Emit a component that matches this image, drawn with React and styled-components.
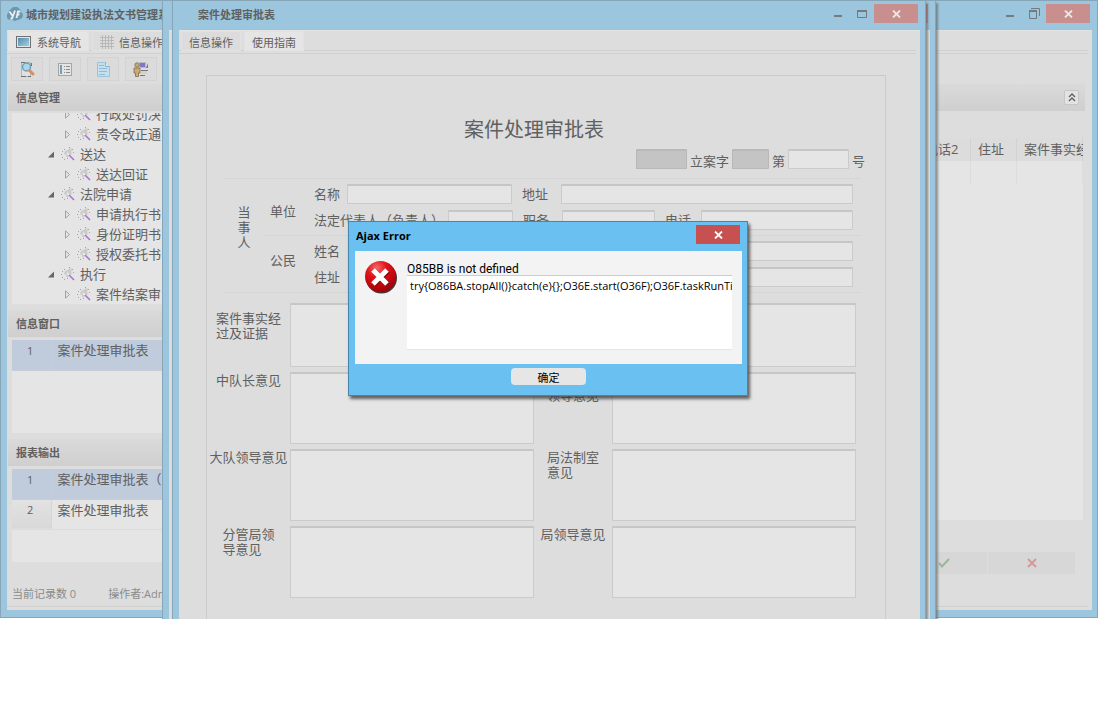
import React from 'react';
import styled, { createGlobalStyle } from 'styled-components';

const GlobalStyle = createGlobalStyle`
  * {
    box-sizing: border-box;
  }

  body {
    margin: 0;
    background: #fff;
    color: #606060;
    font-family: 'Open Sans', 'Noto Sans CJK SC', sans-serif;
    font-size: 13px;
    line-height: 15px;
  }

  button,
  input,
  textarea {
    margin: 0;
    font: inherit;
    color: inherit;
  }

  svg {
    display: block;
    flex: none;
  }
`;

/* ---------- windows ---------- */

const Desktop = styled.div`
  position: relative;
  overflow: hidden;
  padding-bottom: 1px;
`;

const Window = styled.section`
  display: flex;
  flex-direction: column;
  padding: 0 ${p => (p.$slim ? 5 : 6)}px 0 6px;
  background: #9bc6de;
  border: 1px solid #86a6b7;
`;

const MainWindow = styled(Window)`
  padding: 0 5px 7px 6px;
`;

const LayeredWindow = styled(Window)`
  position: absolute;
  top: 0;
  bottom: 0;
  left: ${p => p.$left}px;
  right: ${p => p.$right}px;
  border-bottom: 0;
  box-shadow: 2px 3px 2px rgba(90, 90, 90, 0.6);
`;

const TitleBar = styled.header`
  flex: none;
  display: flex;
  align-items: flex-start;
  height: 29px;
  padding-left: ${p => p.$indent || 0}px;
  padding-right: 2px;
`;

const WindowTitle = styled.h1`
  flex: 1;
  display: flex;
  align-items: center;
  gap: 3px;
  margin: 0;
  height: 26px;
  overflow: hidden;
  white-space: nowrap;
  font-size: 11px;
  font-weight: 700;
  color: ${p => (p.$active ? '#000' : '#606060')};
`;

const WindowButton = styled.button`
  display: flex;
  align-items: center;
  justify-content: center;
  width: 24px;
  height: 24px;
  padding: 0;
  border: 0;
  background: none;
  color: #72808a;
`;

const CloseButton = styled(WindowButton)`
  width: 44px;
  height: 19px;
  margin-top: 3px;
  background: ${p => (p.$active ? '#c75050' : '#c98f8e')};
  color: ${p => (p.$active ? '#fff' : '#e8e8e8')};
`;

const WindowBody = styled.div`
  flex: 1;
  display: flex;
  flex-direction: column;
  min-height: 0;
  background: #ddd;
  box-shadow: inset 0 1px 0 #e2e2e2;
`;

/* ---------- tabs ---------- */

const TabStrip = styled.nav`
  flex: none;
  display: flex;
  gap: 3px;
  height: 24px;
  margin-right: 4px;
  padding: 1px 0 0 ${p => p.$indent}px;
  border-bottom: 1px solid #d0d0d0;
  box-shadow: inset 0 -2px 0 #dedede, inset 0 -3px 0 #d0d0d0;
`;

const Tab = styled.button`
  display: flex;
  align-items: center;
  gap: 5px;
  height: 20px;
  padding: 2px 7px 0;
  white-space: nowrap;
  font-size: 11px;
  border: 1px solid #e2e2e2;
  background: ${p => (p.$light ? '#e5e5e5' : '#dcdcdc')};
`;

/* ---------- main window ---------- */

const Split = styled.div`
  display: flex;
`;

const Sidebar = styled.aside`
  flex: none;
  width: 200px;
`;

const Toolbar = styled.div`
  display: flex;
  gap: 6px;
  padding: 3px 4px;
`;

const ToolButton = styled.button`
  display: flex;
  align-items: center;
  justify-content: center;
  width: 32px;
  height: 24px;
  padding: 0;
  background: #dbdbdb;
  border: 1px solid #d3d3d3;
`;

const PanelHeader = styled.h2`
  display: flex;
  align-items: center;
  justify-content: space-between;
  height: 27px;
  margin: 0 0 0 1px;
  padding: 0 6px 0 8px;
  font-size: 11px;
  font-weight: 700;
  background: linear-gradient(#dadada, #cfcfcf);
`;

const CollapseButton = styled.button`
  display: flex;
  align-items: center;
  justify-content: center;
  width: 15px;
  height: 15px;
  padding: 0;
  background: #e3e3e3;
  border: 1px solid #c6c6c6;
  border-radius: 2px;
`;

const TreeBox = styled.div`
  display: flex;
  flex-direction: column;
  justify-content: flex-end;
  height: 191px;
  margin: 2px 0 6px 5px;
  overflow: hidden;
  background: #e5e5e5;
`;

const Tree = styled.ul`
  margin: 0;
  padding: 0;
  list-style: none;
`;

const TreeItem = styled.li`
  display: flex;
  align-items: center;
  gap: 5px;
  height: 20px;
  padding-left: ${p => (p.$branch ? 36 : 52)}px;
  white-space: nowrap;
`;

const ListBox = styled.div`
  height: 93px;
  margin: 3px 0 6px 5px;
  overflow: hidden;
  background: #e5e5e5;
`;

const ListTable = styled.table`
  width: 100%;
  border-collapse: collapse;

  th,
  td {
    height: 30px;
    padding: 0 6px 8px;
    white-space: nowrap;
    text-align: left;
    font-weight: 400;
    border-bottom: 1px solid #dcdcdc;
  }

  th {
    width: 39px;
    padding-right: 8px;
    padding-bottom: 9px;
    text-align: center;
    font-size: 11px;
    border-right: 1px solid #d6d6d6;
    background: linear-gradient(#e2e2e2, #d8d8d8);
  }
`;

const ListRow = styled.tr`
  && th,
  && td {
    ${p => p.$selected && 'background: #c0cbdc; border-color: #c6ced9;'}
  }
`;

const DataPanel = styled.main`
  flex: 1;
  min-width: 0;
  padding: 30px 7px 0 0;
`;

const DataTableBox = styled.div`
  height: 382px;
  margin: 27px 2px 32px 0;
  overflow: hidden;
  background: #e5e5e5;
`;

const DataTable = styled.table`
  width: 100%;
  table-layout: fixed;
  border-collapse: collapse;

  th,
  td {
    height: 23px;
    padding: 0 0 0 7px;
    white-space: nowrap;
    text-align: left;
    font-weight: 400;
    border-right: 1px solid #d2d2d2;
  }

  th {
    background: #dcdcdc;
  }

  td {
    border-color: #dcdcdc;
  }
`;

const Column = styled.col`
  width: ${p => (p.$width ? `${p.$width}px` : 'auto')};
`;

const PanelActions = styled.div`
  display: flex;
  justify-content: flex-end;
  gap: 1px;
  padding-right: 10px;
`;

const ActionButton = styled.button`
  display: flex;
  align-items: center;
  justify-content: center;
  width: 87px;
  height: 22px;
  padding: 0;
  border: 0;
  background: #d7d7d7;
`;

const StatusBar = styled.footer`
  display: flex;
  gap: 32px;
  height: 33px;
  margin: 0 4px 3px 0;
  padding: 12px 5px 0;
  font-size: 11px;
  color: #8b8b8b;
  border-bottom: 1px solid #d0d0d0;
`;

/* ---------- approval form ---------- */

const Paper = styled.form`
  flex: 1;
  margin: 21px 34px 0 27px;
  border: 1px solid #cbcbcb;
  border-bottom: 0;
`;

const FormTitle = styled.h2`
  margin: 42px 24px 7px 0;
  font-size: 20px;
  font-weight: 400;
  line-height: 24px;
  text-align: center;
`;

const NumberRow = styled.div`
  display: flex;
  align-items: flex-end;
  justify-content: flex-end;
  gap: 3px;
  margin: 0 20px 9px;
`;

const Input = styled.input`
  flex: ${p => p.$grow || 1} 1 0;
  min-width: 0;
  width: 100%;
  height: 20px;
  padding: 0 4px;
  border: 1px solid #cbcbcb;
  border-top: 2px solid #c6c6c6;
  border-radius: 1px;
  background: #e5e5e5;
  outline: 0;
`;

const NumberInput = styled(Input)`
  flex: none;
  width: ${p => p.$width}px;

  &:read-only {
    background: #c4c4c4;
    border-color: #b8b8b8;
  }
`;

const PartySection = styled.fieldset`
  display: grid;
  grid-template-columns: 40px 1fr;
  align-items: center;
  margin: 0 24px 10px 17px;
  padding: 0;
  border: 1px solid #d5d5d5;
  border-width: 1px 0;
`;

const PartyName = styled.div`
  width: 13px;
  margin: 0 auto;
  padding-bottom: 17px;
`;

const PartyGroup = styled.div`
  display: grid;
  grid-template-columns: 50px 1fr;
  align-items: center;
  padding: 5px 8px 5px 0;

  & + & {
    border-top: 1px solid #d5d5d5;
  }
`;

const PartyGroups = styled.div``;

const GroupName = styled.div`
  padding: ${p => (p.$low ? '8px 0 0' : '0 0 8px')} 6px;
`;

const GroupRows = styled.div`
  display: flex;
  flex-direction: column;
  gap: 6px;
`;

const FieldRow = styled.div`
  display: flex;
  gap: 10px;
`;

const FieldBox = styled.div`
  flex: ${p => p.$grow || 1} 1 0;
  display: flex;
  align-items: center;
  gap: 4px;
  min-width: 0;
`;

const FieldLabel = styled.label`
  flex: none;
  min-width: ${p => p.$width || 0}px;
  white-space: nowrap;
`;

const Opinions = styled.div`
  display: grid;
  grid-template-columns: 83px 1fr 78px 1fr;
  row-gap: 5px;
  margin-right: 29px;
`;

const OpinionLabel = styled.label`
  display: flex;
  justify-content: center;
  padding-top: ${p => (p.$wide ? 8 : 1)}px;
  white-space: pre;
`;

const TextBox = styled.textarea`
  display: block;
  width: 100%;
  height: ${p => (p.$wide ? 64 : 72)}px;
  padding: 4px;
  grid-column: ${p => (p.$wide ? 'span 3' : 'auto')};
  border: 1px solid #cbcbcb;
  border-top: 2px solid #c6c6c6;
  border-radius: 1px;
  background: #e5e5e5;
  resize: none;
  outline: 0;
`;

/* ---------- error dialog ---------- */

const Overlay = styled.div`
  position: absolute;
  inset: 0 2px 2px 0;
  display: flex;
  align-items: center;
  justify-content: center;
`;

const Dialog = styled.div`
  width: 400px;
  padding: 0 5px 0 6px;
  color: #000;
  background: #6ac1f1;
  border: 1px solid #4686aa;
  box-shadow: 2px 3px 3px rgba(50, 50, 50, 0.75);
`;

const DialogBody = styled.div`
  display: flex;
  gap: 10px;
  height: 113px;
  padding: 10px 10px 0 10px;
  background: #f3f3f3;
`;

const DialogContent = styled.div`
  flex: 1;
  min-width: 0;
`;

const DialogMessage = styled.label`
  display: block;
  height: 14px;
  padding-top: 1px;
  font-family: Roboto, sans-serif;
  font-size: 12px;
`;

const DialogDetail = styled.textarea`
  display: block;
  width: 100%;
  height: 75px;
  padding: 2px 0 0 3px;
  overflow: hidden;
  white-space: pre;
  font-size: 11px;
  line-height: 15px;
  border: 0;
  border-top: 1px solid #ccc;
  border-bottom: 1px solid #e6e6e6;
  background: #fff;
  resize: none;
  outline: 0;
`;

const DialogFooter = styled.div`
  display: flex;
  justify-content: center;
  padding: 4px 0 10px;
`;

const OkButton = styled.button`
  width: 75px;
  height: 17px;
  padding: 3px 0 0;
  font-size: 11px;
  line-height: 14px;
  border: 0;
  border-radius: 4px;
  background: #e6e6e6;
`;

/* ---------- icons ---------- */

const CloseIcon = () => (
  <svg width='9' height='8' viewBox='0 0 9 8'>
    <path d='M1 .5 8 7.5M8 .5 1 7.5' stroke='currentColor' strokeWidth='1.8' />
  </svg>
);

const MinimizeIcon = () => (
  <svg width='10' height='14' viewBox='0 0 10 14'>
    <rect x='1' y='9' width='8' height='2' fill='#737b80' />
  </svg>
);

const MaximizeIcon = () => (
  <svg width='11' height='12' viewBox='0 0 11 12'>
    <path d='M.5 3v7.500h9V3' fill='none' stroke='#737b80' />
    <rect width='10' height='2' y='3' fill='#737b80' />
  </svg>
);

const RestoreIcon = () => (
  <svg width='11' height='11' viewBox='0 0 11 11'>
    <path d='M2 .5h8.500V8M.5 3v7.500h7V3' fill='none' stroke='#737b80' />
    <rect y='2' width='8' height='2' fill='#737b80' />
  </svg>
);

const LogoIcon = () => (
  <svg width='16' height='14' viewBox='0 0 16 14'>
    <path
      d='M4 12.500a3.500 3.500 0 0 1-2.500-6.500A4 4 0 0 1 4 2a5 5 0 0 1 8-.500 5 5 0 0 1 2.500 4A4 4 0 0 1 12 12.500L8 14z'
      fill='#6b97b0'
    />
    <path
      d='M2.500 4.500 5.500 9M8 3.500 5 11.500H3.500M13.500 4.500H11L9.500 11M9.500 7.500h3'
      fill='none'
      stroke='#e8eef1'
      strokeWidth='1.8'
    />
  </svg>
);

const ScreenIcon = () => (
  <svg width='16' height='13' viewBox='0 0 16 13'>
    <defs>
      <linearGradient id='screen' x2='1' y2='1'>
        <stop offset='0' stopColor='#4f8eb3' />
        <stop offset='1' stopColor='#a9cbdc' />
      </linearGradient>
    </defs>
    <rect x='.5' y='.5' width='14' height='11' fill='#dfe5e8' stroke='#717171' />
    <rect x='2' y='2' width='11' height='8' fill='url(#screen)' />
  </svg>
);

const GridIcon = () => (
  <svg width='14' height='14' viewBox='0 0 14 14'>
    <path
      d='M2.500 0v14M5.500 0v14M8.500 0v14M11.500 0v14M0 2.500h14M0 5.500h14M0 8.500h14M0 11.500h14'
      stroke='#b8b8b8'
    />
  </svg>
);

const SearchPageIcon = () => (
  <svg width='16' height='17' viewBox='0 0 16 17'>
    <path d='M2.500 1.500h9v14h-9z' fill='#e0e0e0' stroke='#b5b5b5' />
    <path d='M2 1.500h4M9 15.500h3M2 15.500h5M12.500 2v3' stroke='#6f6f6f' />
    <circle cx='7.500' cy='6' r='4' fill='#a8d6ea' stroke='#6ea1b8' strokeWidth='1.500' />
    <path d='m10.500 9.500 3.500 3.500' stroke='#d1906a' strokeWidth='3' strokeLinecap='round' />
  </svg>
);

const FormIcon = () => (
  <svg width='14' height='13' viewBox='0 0 14 13'>
    <rect x='.5' y='.5' width='13' height='12' fill='#e4e4e4' stroke='#a6a6a6' />
    <path d='M3 2v9' stroke='#78a0b5' strokeWidth='2' />
    <path d='M6 3.500h1M6 6.500h1M6 9.500h1M8 3.500h4M8 6.500h4M8 9.500h4' stroke='#8b8b8b' />
  </svg>
);

const DocumentIcon = () => (
  <svg width='13' height='15' viewBox='0 0 13 15'>
    <path d='M.5 .5h8l4 4v10h-12z' fill='#c3e0ee' stroke='#9cc3d8' />
    <path d='M8.500 .5v4h4' fill='#e1edf3' stroke='#8cb0c4' />
    <path d='M2 3.500h5M2 6.500h8M2 9.500h8M2 12.500h6' stroke='#92bbd1' />
  </svg>
);

const PersonIcon = () => (
  <svg width='16' height='16' viewBox='0 0 16 16'>
    <rect x='6.500' y='1.500' width='6' height='5' fill='#7d78c8' stroke='#b9b8cf' />
    <path d='m13 7 2-5v5z' fill='#777' />
    <path d='M8 9.500h7M7 14.500h5' stroke='#777' />
    <rect x='8' y='10' width='6' height='3' fill='#d2d2d2' />
    <circle cx='4' cy='4' r='2.200' fill='#c9ab74' stroke='#7c6c4c' strokeWidth='.8' />
    <path
      d='M1 7h6v5H5.500v3.500h-3V12H1z'
      fill='#c9ab74'
      stroke='#7c6c4c'
      strokeWidth='.8'
    />
  </svg>
);

const WandIcon = () => (
  <svg width='14' height='14' viewBox='0 0 14 14'>
    <path d='m4 4 3-1 2-2 2 1-1 3 1 2-3 2-2 2-1-3-2-1z' fill='#cbcbcb' />
    <path
      d='M1 4.500h1M0 7.500h1M1 10.500h1M3 12.500h1M3 2.500h1M8 .5h1M11 2.500h1M12 5.500h1M6 11.500h1'
      stroke='#a5a5a5'
    />
    <path d='m6 6 2 2' stroke='#f0f0f0' strokeWidth='1.600' />
    <path d='m8 8 5 5' stroke='#ab73cf' strokeWidth='1.600' />
  </svg>
);

const ArrowIcon = ({ open }) => (
  <svg width='8' height='9' viewBox='0 0 8 9'>
    {open ? (
      <path d='M6 1.500v6H0z' fill='#666' />
    ) : (
      <path d='M1.500 .8 5.500 4.500l-4 3.700z' fill='none' stroke='#a2a2a2' />
    )}
  </svg>
);

const CollapseIcon = () => (
  <svg width='8' height='9' viewBox='0 0 8 9'>
    <path d='m1 4 3-3 3 3M1 8l3-3 3 3' fill='none' stroke='#606060' strokeWidth='1.400' />
  </svg>
);

const CheckIcon = () => (
  <svg width='12' height='10' viewBox='0 0 12 10'>
    <path d='m1 5 3 3.500L11 1' fill='none' stroke='#96b89d' strokeWidth='2' />
  </svg>
);

const CrossIcon = () => (
  <svg width='10' height='10' viewBox='0 0 10 10'>
    <path d='m1 1 8 8M9 1 1 9' stroke='#d29a96' strokeWidth='2' />
  </svg>
);

const ErrorIcon = () => (
  <svg width='32' height='33' viewBox='0 0 32 33'>
    <defs>
      <radialGradient id='ball' cx='.38' cy='.22' r='.8'>
        <stop offset='0' stopColor='#f46a66' />
        <stop offset='.4' stopColor='#e01219' />
        <stop offset='1' stopColor='#a30007' />
      </radialGradient>
    </defs>
    <circle cx='16.500' cy='17' r='15.500' fill='#4c3434' />
    <circle cx='15.500' cy='15.500' r='15.500' fill='url(#ball)' />
    <path d='m9 10 14 14M23 10 9 24' stroke='#7e0a0c' strokeWidth='5' />
    <path d='m8 9 14 14M22 9 8 23' stroke='#fff' strokeWidth='5' />
  </svg>
);

/* ---------- data ---------- */

const treeItems = [
  { text: '行政处罚决' },
  { text: '责令改正通' },
  { text: '送达', branch: true },
  { text: '送达回证' },
  { text: '法院申请', branch: true },
  { text: '申请执行书' },
  { text: '身份证明书' },
  { text: '授权委托书' },
  { text: '执行', branch: true },
  { text: '案件结案审' }
];

const opinions = [
  { id: 'squadron', text: '中队长意见' },
  { id: 'branch', text: '分管\n领导意见' },
  { id: 'brigade', text: '大队领导意见' },
  { id: 'legal', text: '局法制室\n意见' },
  { id: 'deputy', text: '分管局领\n导意见' },
  { id: 'bureau', text: '局领导意见' }
];

/* ---------- parts ---------- */

const Controls = ({ restore }) => (
  <>
    <WindowButton aria-label='最小化'>
      <MinimizeIcon />
    </WindowButton>
    <WindowButton aria-label='最大化'>
      {restore ? <RestoreIcon /> : <MaximizeIcon />}
    </WindowButton>
    <CloseButton aria-label='关闭'>
      <CloseIcon />
    </CloseButton>
  </>
);

const Field = ({ id, text, grow, labelWidth }) => (
  <FieldBox $grow={grow}>
    <FieldLabel htmlFor={id} $width={labelWidth}>
      {text}
    </FieldLabel>
    <Input id={id} />
  </FieldBox>
);

const List = ({ rows }) => (
  <ListBox>
    <ListTable>
      <tbody>
        {rows.map((row, i) => (
          <ListRow key={row} $selected={i === 0}>
            <th scope='row'>{i + 1}</th>
            <td>{row}</td>
          </ListRow>
        ))}
      </tbody>
    </ListTable>
  </ListBox>
);

const SystemWindow = () => (
  <MainWindow>
    <TitleBar>
      <WindowTitle>
        <LogoIcon />
        城市规划建设执法文书管理系
      </WindowTitle>
      <Controls restore />
    </TitleBar>
    <WindowBody>
      <TabStrip $indent={1}>
        <Tab $light>
          <ScreenIcon />
          系统导航
        </Tab>
        <Tab>
          <GridIcon />
          信息操作
        </Tab>
      </TabStrip>
      <Split>
        <Sidebar>
          <Toolbar>
            <ToolButton aria-label='查询'>
              <SearchPageIcon />
            </ToolButton>
            <ToolButton aria-label='列表'>
              <FormIcon />
            </ToolButton>
            <ToolButton aria-label='文档'>
              <DocumentIcon />
            </ToolButton>
            <ToolButton aria-label='用户'>
              <PersonIcon />
            </ToolButton>
          </Toolbar>
          <PanelHeader>信息管理</PanelHeader>
          <TreeBox>
            <Tree>
              {treeItems.map(({ text, branch }) => (
                <TreeItem key={text} $branch={branch}>
                  <ArrowIcon open={branch} />
                  <WandIcon />
                  {text}
                </TreeItem>
              ))}
            </Tree>
          </TreeBox>
          <PanelHeader>信息窗口</PanelHeader>
          <List rows={['案件处理审批表']} />
          <PanelHeader>报表输出</PanelHeader>
          <List rows={['案件处理审批表（', '案件处理审批表']} />
        </Sidebar>
        <DataPanel>
          <PanelHeader>
            <span />
            <CollapseButton aria-label='折叠'>
              <CollapseIcon />
            </CollapseButton>
          </PanelHeader>
          <DataTableBox>
            <DataTable>
              <colgroup>
                <Column />
                <Column $width={53} />
                <Column $width={46} />
                <Column $width={66} />
              </colgroup>
              <thead>
                <tr>
                  <th />
                  <th>电话2</th>
                  <th>住址</th>
                  <th>案件事实经</th>
                </tr>
              </thead>
              <tbody>
                <tr>
                  <td />
                  <td />
                  <td />
                  <td />
                </tr>
              </tbody>
            </DataTable>
          </DataTableBox>
          <PanelActions>
            <ActionButton aria-label='确认'>
              <CheckIcon />
            </ActionButton>
            <ActionButton aria-label='取消'>
              <CrossIcon />
            </ActionButton>
          </PanelActions>
        </DataPanel>
      </Split>
      <StatusBar>
        <span>当前记录数 0</span>
        <span>操作者:Admin</span>
      </StatusBar>
    </WindowBody>
  </MainWindow>
);

const ApprovalForm = () => (
  <Paper>
    <FormTitle>案件处理审批表</FormTitle>
    <NumberRow>
      <NumberInput id='area' $width={51} readOnly aria-label='地区' />
      <label htmlFor='area'>立案字</label>
      <NumberInput id='year' $width={37} readOnly aria-label='年度' />
      <label htmlFor='number'>第</label>
      <NumberInput id='number' $width={61} />
      <span>号</span>
    </NumberRow>
    <PartySection>
      <PartyName>当事人</PartyName>
      <PartyGroups>
        <PartyGroup>
          <GroupName $low>单位</GroupName>
          <GroupRows>
            <FieldRow>
              <Field id='company' text='名称' grow={198} labelWidth={29} />
              <Field id='address' text='地址' grow={331} labelWidth={35} />
            </FieldRow>
            <FieldRow>
              <Field id='legalPerson' text='法定代表人（负责人）' grow={199} />
              <Field id='duty' text='职务' grow={132} labelWidth={35} />
              <Field id='phone' text='电话' grow={188} labelWidth={32} />
            </FieldRow>
          </GroupRows>
        </PartyGroup>
        <PartyGroup>
          <GroupName>公民</GroupName>
          <GroupRows>
            <Field id='person' text='姓名' labelWidth={35} />
            <Field id='home' text='住址' labelWidth={35} />
          </GroupRows>
        </PartyGroup>
      </PartyGroups>
    </PartySection>
    <Opinions>
      <OpinionLabel htmlFor='facts' $wide>
        {'案件事实经\n过及证据'}
      </OpinionLabel>
      <TextBox id='facts' $wide />
      {opinions.map(({ id, text }) => (
        <React.Fragment key={id}>
          <OpinionLabel htmlFor={id}>{text}</OpinionLabel>
          <TextBox id={id} />
        </React.Fragment>
      ))}
    </Opinions>
  </Paper>
);

const ErrorDialog = () => (
  <Overlay>
    <Dialog role='dialog' aria-label='Ajax Error'>
      <TitleBar $indent={1}>
        <WindowTitle $active>Ajax Error</WindowTitle>
        <CloseButton $active aria-label='关闭'>
          <CloseIcon />
        </CloseButton>
      </TitleBar>
      <DialogBody>
        <ErrorIcon />
        <DialogContent>
          <DialogMessage htmlFor='detail'>O85BB is not defined</DialogMessage>
          <DialogDetail
            id='detail'
            readOnly
            value='try{O86BA.stopAll()}catch(e){};O36E.start(O36F);O36F.taskRunTi'
          />
        </DialogContent>
      </DialogBody>
      <DialogFooter>
        <OkButton>确定</OkButton>
      </DialogFooter>
    </Dialog>
  </Overlay>
);

const App = () => (
  <>
    <GlobalStyle />
    <Desktop>
      <SystemWindow />
      <LayeredWindow $left={162} $right={162} $slim>
        <TitleBar>
          <WindowTitle />
          <CloseButton aria-label='关闭' />
        </TitleBar>
        <WindowBody />
      </LayeredWindow>
      <LayeredWindow $left={172} $right={172} $slim>
        <TitleBar $indent={19}>
          <WindowTitle>案件处理审批表</WindowTitle>
          <Controls />
        </TitleBar>
        <WindowBody>
          <TabStrip $indent={2}>
            <Tab>信息操作</Tab>
            <Tab $light>使用指南</Tab>
          </TabStrip>
          <ApprovalForm />
        </WindowBody>
      </LayeredWindow>
      <ErrorDialog />
    </Desktop>
  </>
);

export default App;
